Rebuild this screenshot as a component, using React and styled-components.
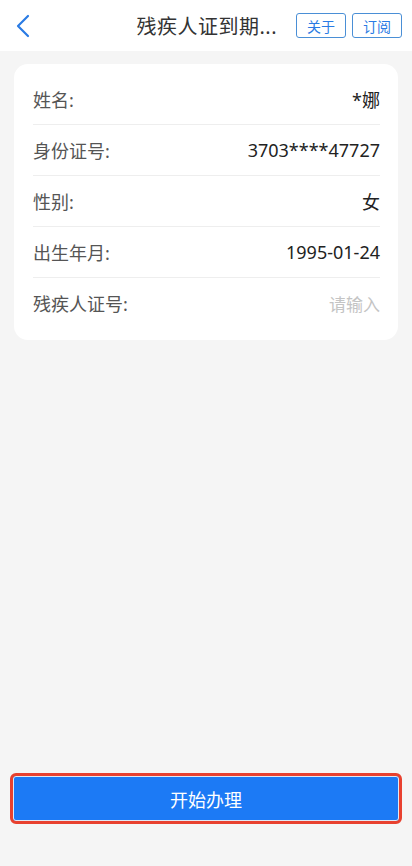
import styled, { createGlobalStyle } from 'styled-components';

const GlobalStyle = createGlobalStyle`
    html, body {
        margin: 0;
        padding: 0;
        background: #f5f5f5;
        font-family: "Noto Sans", "Noto Sans CJK SC", sans-serif;
    }
`;

const rows = [
    { label: '姓名:', value: '*娜' },
    { label: '身份证号:', value: '3703****47727' },
    { label: '性别:', value: '女' },
    { label: '出生年月:', value: '1995-01-24' },
    { label: '残疾人证号:', value: '请输入', placeholder: true },
];

const App = () => {
    return (
        <Page>
            <GlobalStyle />
            <Header>
                <BackButton>
                    <svg width="14" height="24" viewBox="0 0 14 24" fill="none">
                        <path d="M12 2 L2 12 L12 22" stroke="#2a7be4" strokeWidth="2.2" strokeLinecap="round" strokeLinejoin="round" />
                    </svg>
                </BackButton>
                <Title>残疾人证到期...</Title>
                <Actions>
                    <OutlineButton>关于</OutlineButton>
                    <OutlineButton>订阅</OutlineButton>
                </Actions>
            </Header>
            <Card>
                {rows.map((row, i) => (
                    <Row key={row.label} last={i === rows.length - 1}>
                        <Label>{row.label}</Label>
                        <Value placeholder={row.placeholder}>{row.value}</Value>
                    </Row>
                ))}
            </Card>
            <Spacer />
            <Footer>
                <SubmitButton>开始办理</SubmitButton>
            </Footer>
        </Page>
    );
};

const Page = styled.div`
    min-height: 866px;
    display: flex;
    flex-direction: column;
    background: #f5f5f5;
`;

const Header = styled.div`
    height: 51px;
    background: #fff;
    display: flex;
    align-items: center;
    padding: 0 10px 0 16px;
    box-sizing: border-box;
`;

const BackButton = styled.div`
    width: 30px;
    display: flex;
    align-items: center;
    margin-top: 1px;
`;

const Title = styled.div`
    flex: 1;
    text-align: right;
    padding-right: 19px;
    font-size: 20px;
    color: #333;
    letter-spacing: 0.5px;
    white-space: nowrap;
`;

const Actions = styled.div`
    display: flex;
    gap: 6px;
`;

const OutlineButton = styled.div`
    width: 50px;
    height: 25px;
    box-sizing: border-box;
    border: 1px solid #4a8fd6;
    border-radius: 3px;
    color: #2a7be4;
    font-size: 14px;
    display: flex;
    align-items: center;
    justify-content: center;
`;

const Card = styled.div`
    margin: 13px 14px 0;
    background: #fff;
    border-radius: 14px;
    padding: 10px 18px 12px 19px;
`;

const Row = styled.div`
    height: 50px;
    display: flex;
    align-items: center;
    justify-content: space-between;
    border-bottom: ${(p) => (p.last ? 'none' : '1px solid #eeeeee')};
`;

const Label = styled.span`
    font-size: 18px;
    color: #555;
`;

const Value = styled.span`
    color: ${(p) => (p.placeholder ? '#c4c4c4' : '#222')};
    font-size: ${(p) => (p.placeholder ? '17px' : '18px')};
`;

const Spacer = styled.div`
    flex: 1;
`;

const Footer = styled.div`
    padding: 0 10px 42px;
`;

const SubmitButton = styled.div`
    height: 51px;
    box-sizing: border-box;
    background: #1c7af5;
    border: 3px solid #e8412f;
    border-radius: 6px;
    box-shadow: inset 0 0 0 1px #dfe8f5;
    color: #fff;
    font-size: 18px;
    display: flex;
    align-items: center;
    justify-content: center;
`;

export default App;
